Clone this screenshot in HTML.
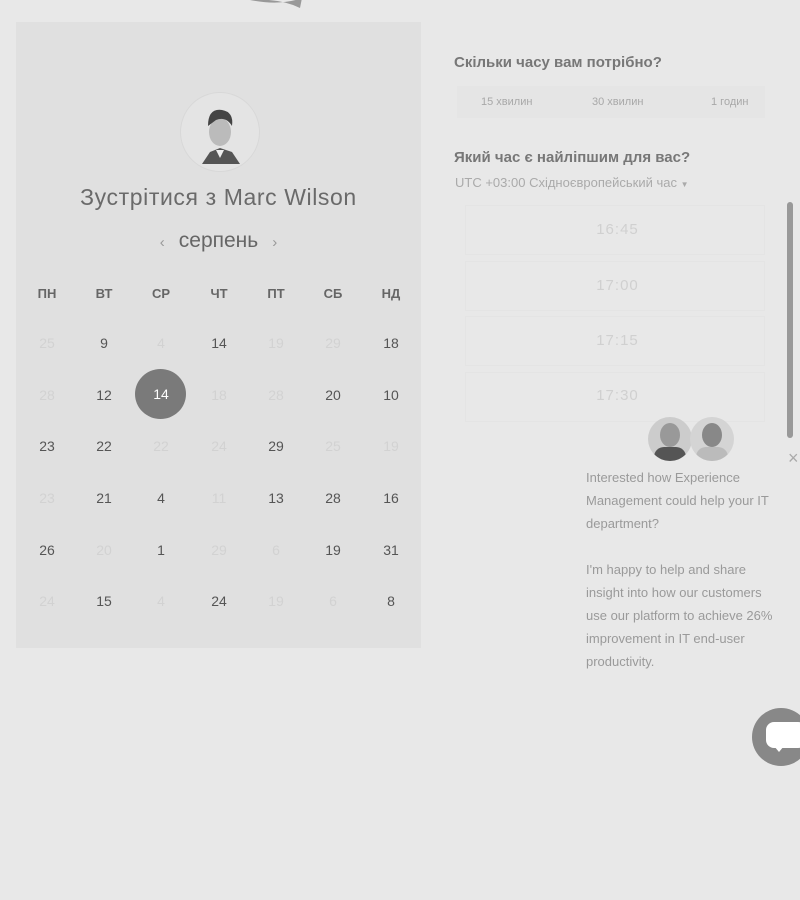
<!DOCTYPE html>
<html><head><meta charset="utf-8"><style>
body{margin:0;width:800px;height:900px;background:#e8e8e8;font-family:"Liberation Sans",sans-serif;position:relative;overflow:hidden}
.a{position:absolute}
.panel{left:16px;top:22px;width:405px;height:626px;background:#e0e0e0}
.d{position:absolute;width:50px;text-align:center;font-size:14px;color:#555;transform:translate(-25px,-8px)}
.f{color:#d2d2d2}
.h{position:absolute;width:50px;text-align:center;font-size:13px;font-weight:bold;color:#666;transform:translateX(-25px)}
.t{position:absolute;left:470px;width:295px;text-align:center;font-size:15px;color:#d0d0d0;letter-spacing:1px}
.tb{position:absolute;left:465px;width:300px;height:50px;border:1px solid #e4e4e4;box-sizing:border-box}
.p{font-size:13px;color:#9a9a9a;line-height:23px;left:586px;width:214px;white-space:nowrap}
</style></head><body>
<svg class="a" style="left:240px;top:0" width="70" height="12"><path d="M10 0 Q40 6 62 -2 L60 8 Q40 -2 10 0Z" fill="#999"/></svg>
<div class="a panel"></div>
<div class="a" style="left:180px;top:92px;width:78px;height:78px;border-radius:50%;background:#e4e4e4;border:1px solid #d8d8d8"></div>
<svg class="a" style="left:190px;top:100px" width="60" height="66" viewBox="0 0 60 66">
<path d="M12 64 L20 52 L30 48 L42 52 L50 64Z" fill="#555"/>
<path d="M26 50 L30 58 L34 50Z" fill="#eee"/>
<ellipse cx="30" cy="32" rx="11" ry="14" fill="#bbb"/>
<path d="M18 26 Q18 8 32 10 Q44 12 42 26 Q36 16 26 20Z" fill="#444"/>
</svg>
<div class="a" style="left:16px;width:405px;top:184px;text-align:center;font-size:23px;color:#6a6a6a;letter-spacing:0.6px">Зустрітися з Marc Wilson</div>
<div class="a" style="left:16px;width:405px;top:229px;text-align:center;font-size:21px;color:#666"><span style="color:#999;font-size:15px;margin-right:14px">‹</span>серпень<span style="color:#999;font-size:15px;margin-left:14px">›</span></div>
<div class="h" style="left:47px;top:286px">ПН</div><div class="h" style="left:104px;top:286px">ВТ</div><div class="h" style="left:161px;top:286px">СР</div><div class="h" style="left:219px;top:286px">ЧТ</div><div class="h" style="left:276px;top:286px">ПТ</div><div class="h" style="left:333px;top:286px">СБ</div><div class="h" style="left:391px;top:286px">НД</div>
<div class="a" style="left:135px;top:369px;width:51px;height:50px;border-radius:50%;background:#7a7a7a"></div>
<div id="g"></div>
<script>
var rows=[["25f","9","4f","14","19f","29f","18"],["28f","12","14s","18f","28f","20","10"],["23","22","22f","24f","29","25f","19f"],["23f","21","4","11f","13","28","16"],["26","20f","1","29f","6f","19","31"],["24f","15","4f","24","19f","6f","8"]];
var xs=[47,104,161,219,276,333,391],ys=[343,395,446,498,550,601],h="";
rows.forEach(function(r,i){r.forEach(function(c,j){var f=c.slice(-1)=="f",s=c.slice(-1)=="s";var n=c.replace(/[fs]/,"");
h+='<div class="d'+(f?' f':'')+'" style="left:'+xs[j]+'px;top:'+(ys[i]-(s?1:0))+'px;'+(s?'color:#fff':'')+'">'+n+'</div>';});});
document.getElementById("g").innerHTML=h;
</script>
<div class="a" style="left:454px;top:54px;font-size:15px;font-weight:bold;color:#777">Скільки часу вам потрібно?</div>
<div class="a" style="left:457px;top:86px;width:308px;height:32px;background:#e5e5e5"></div>
<div class="a" style="left:481px;top:96px;font-size:11px;color:#a8a8a8">15 хвилин</div>
<div class="a" style="left:592px;top:96px;font-size:11px;color:#a8a8a8">30 хвилин</div>
<div class="a" style="left:711px;top:96px;font-size:11px;color:#a8a8a8">1 годин</div>
<div class="a" style="left:454px;top:149px;font-size:15px;font-weight:bold;color:#777">Який час є найліпшим для вас?</div>
<div class="a" style="left:455px;top:175px;font-size:13px;color:#aaa">UTC +03:00 Східноєвропейський час <span style="font-size:8px">▼</span></div>
<div class="tb" style="top:205px"></div><div class="tb" style="top:261px"></div><div class="tb" style="top:316px"></div><div class="tb" style="top:372px"></div>
<div class="t" style="top:221px">16:45</div><div class="t" style="top:277px">17:00</div><div class="t" style="top:332px">17:15</div><div class="t" style="top:387px">17:30</div>
<div class="a" style="left:787px;top:202px;width:6px;height:236px;background:#999;border-radius:3px"></div>
<div class="a" style="left:648px;top:417px;width:44px;height:44px;border-radius:50%;background:#ccc;overflow:hidden"><div style="position:absolute;left:12px;top:6px;width:20px;height:24px;border-radius:50%;background:#999"></div><div style="position:absolute;left:6px;top:30px;width:32px;height:20px;border-radius:10px;background:#555"></div></div>
<div class="a" style="left:690px;top:417px;width:44px;height:44px;border-radius:50%;background:#d4d4d4;overflow:hidden"><div style="position:absolute;left:12px;top:6px;width:20px;height:24px;border-radius:50%;background:#888"></div><div style="position:absolute;left:6px;top:30px;width:32px;height:20px;border-radius:10px;background:#bbb"></div></div>
<div class="a" style="left:788px;top:448px;font-size:18px;color:#aaa">×</div>
<div class="a p" style="top:466px">Interested how Experience<br>Management could help your IT<br>department?<br><br>I'm happy to help and share<br>insight into how our customers<br>use our platform to achieve 26%<br>improvement in IT end-user<br>productivity.</div>
<div class="a" style="left:752px;top:708px;width:58px;height:58px;border-radius:50%;background:#888"></div>
<div class="a" style="left:766px;top:722px;width:40px;height:26px;border-radius:8px;background:#fff"></div>
<div class="a" style="left:774px;top:746px;width:0;height:0;border-left:5px solid transparent;border-right:5px solid transparent;border-top:6px solid #fff"></div>
</body></html>
